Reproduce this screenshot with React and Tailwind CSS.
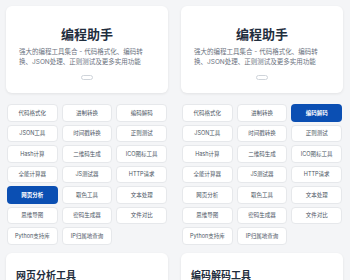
import React from "react";

const tools = [
  "代码格式化", "进制转换", "编码解码",
  "JSON工具", "时间戳转换", "正则测试",
  "Hash计算", "二维码生成", "ICO图标工具",
  "全能计算器", "JS测试器", "HTTP请求",
  "网页分析", "取色工具", "文本处理",
  "思维导图", "密码生成器", "文件对比",
  "Python支持库", "IP归属地查询",
];

function Panel({ active, heading }) {
  return (
    <div className="w-[175px] shrink-0 pt-[6px] pl-[6px]">
      <div className="w-[162px] h-[87px] bg-white rounded-[6px] shadow-[0_1px_3px_rgba(0,0,0,0.08)] pt-[20px] px-[13px] flex flex-col">
        <div className="text-center text-[13px] leading-[16px] font-bold text-[#1f2d3d]">编程助手</div>
        <div className="mt-[5px] w-[127px] text-[6.5px] leading-[10px] text-[#6b7280]">
          强大的编程工具集合 - 代码格式化、编码转换、JSON处理、正则测试及更多实用功能
        </div>
        <div className="mt-[8px] self-center ml-[-1px] w-[12px] h-[5px] rounded-full border border-[#cfd4da] bg-white"></div>
      </div>
      <div className="mt-[11px] ml-[1px] w-[160px] grid grid-cols-3 gap-x-[4px] gap-y-[3px]">
        {tools.map((t) => (
          <div
            key={t}
            className={
              t === active
                ? "h-[17.5px] rounded-[4px] bg-[#0b4fb3] text-white font-semibold text-[5.5px] flex items-center justify-center"
                : "h-[17.5px] rounded-[4px] bg-white border border-[#e6e8eb] text-[#4b5563] text-[5.5px] flex items-center justify-center"
            }
          >
            {t}
          </div>
        ))}
      </div>
      <div className="mt-[8.5px] w-[162px] h-[40px] bg-white rounded-[6px] shadow-[0_1px_3px_rgba(0,0,0,0.08)] pt-[16px] pl-[10px]">
        <div className="text-[10px] leading-[12px] font-bold text-[#1f2d3d]">{heading}</div>
      </div>
    </div>
  );
}

export default function App() {
  return (
    <div
      className="w-[350px] h-[280px] overflow-hidden bg-[#f4f5f7] flex"
      style={{ fontFamily: 'Inter, "Noto Sans CJK SC", sans-serif' }}
    >
      <Panel active="网页分析" heading="网页分析工具" />
      <Panel active="编码解码" heading="编码解码工具" />
    </div>
  );
}
